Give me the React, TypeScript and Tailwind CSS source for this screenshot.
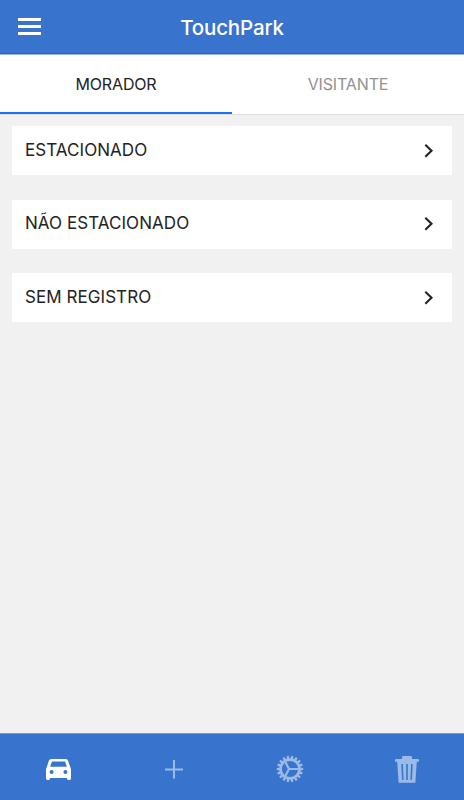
import React from 'react';

const teeth = Array.from({ length: 18 }, (_, i) => i * 20);

function CarIcon() {
  return (
    <svg viewBox="0 0 25 21" className="h-[21px] w-[25px]" fill="currentColor">
      <path
        fillRule="evenodd"
        d="M5.2 0H19.8Q21.4 0 22 1.5L24.6 9Q25 10 25 11V19.6Q25 21 23.6 21H22.3Q21 21 21 19.6V19H4V19.6Q4 21 2.7 21H1.4Q0 21 0 19.6V11Q0 10 .4 9L3 1.5Q3.6 0 5.2 0ZM6 2.4L4.1 7.8H20.9L19 2.4ZM5.6 11A2 2 0 1 0 5.6 15A2 2 0 1 0 5.6 11ZM19.4 11A2 2 0 1 0 19.4 15A2 2 0 1 0 19.4 11Z"
      />
    </svg>
  );
}

function PlusIcon() {
  return (
    <svg viewBox="0 0 20 20" className="h-5 w-5" stroke="currentColor" strokeWidth="2" fill="none">
      <path d="M1 10.4H19M10 1V19.5" />
    </svg>
  );
}

function GearIcon() {
  return (
    <svg viewBox="-14 -14 28 28" className="h-7 w-7" stroke="currentColor" fill="none">
      <circle r="9.4" strokeWidth="2.6" />
      {teeth.map((a) => (
        <path key={a} d="M10 -1.4L13.2 -1V1L10 1.4Z" transform={`rotate(${a})`} fill="currentColor" stroke="none" />
      ))}
      <path d="M-1 0H9M-1 0L-5 -7.6M-1 0L-5 7.6" strokeWidth="2.2" />
    </svg>
  );
}

function TrashIcon() {
  return (
    <svg viewBox="0 0 24 28" className="h-7 w-6" fill="currentColor">
      <path
        fillRule="evenodd"
        d="M7 4V2.4Q7 1 8.5 1H15.5Q17 1 17 2.4V4H23Q24 4 24 5V6.7H21.8L20.4 27.7H3.6L2.2 6.7H0V5Q0 4 1 4ZM6.3 9L7.1 25H8.6L7.9 9ZM11.2 9V25H12.8V9ZM16.1 9L15.4 25H16.9L17.7 9Z"
      />
    </svg>
  );
}

function Row({ label }: { label: string }) {
  return (
    <button className="flex h-[49px] w-full items-center justify-between bg-white pl-[13px] pr-[18px] text-left text-[17px] text-[#222]">
      <span className="tracking-[0.06px]">{label}</span>
      <svg viewBox="0 0 10 16" className="h-4 w-2.5" fill="none" stroke="#222" strokeWidth="2.1">
        <path d="M1.3 1.8L7.5 7.8L1.3 13.8" />
      </svg>
    </button>
  );
}

export default function App() {
  return (
    <div className="flex h-[800px] w-[464px] flex-col overflow-hidden bg-[#f1f1f1] font-['Inter','Liberation_Sans',sans-serif]">
      <header className="grid h-[55px] shrink-0 grid-cols-[1fr_auto_1fr] items-center border-b border-[#9eb9df] bg-[#3874cd] px-[18px] text-white shadow-[inset_0_-1px_0_#2468c4]">
        <button aria-label="Menu" className="mb-[2px] flex w-[23px] flex-col gap-1">
          <span className="h-[3px] bg-white" />
          <span className="h-[3px] bg-white" />
          <span className="h-[3px] bg-white" />
        </button>
        <h1 className="pt-[2px] text-[20.5px] font-medium tracking-[-0.15px]">TouchPark</h1>
      </header>
      <nav className="flex h-[60px] shrink-0 border-b border-[#dedede] bg-white text-base tracking-[-0.15px]">
        <button className="-mb-px flex h-[59px] flex-1 items-center justify-center border-b-2 border-[#1673f5] text-[#222]">MORADOR</button>
        <button className="flex h-[59px] flex-1 items-center justify-center border-b-2 border-transparent text-[#929292]">VISITANTE</button>
      </nav>
      <main className="flex flex-1 flex-col gap-[24.5px] px-3 pt-[11px]">
        <Row label="ESTACIONADO" />
        <Row label="NÃO ESTACIONADO" />
        <Row label="SEM REGISTRO" />
      </main>
      <footer className="grid h-[67px] shrink-0 grid-cols-4 place-items-center border-t border-[#719bd4] bg-[#3874cd] pt-1 text-[#9bbae6]">
        <button aria-label="Carros" className="pl-px text-white"><CarIcon /></button>
        <button aria-label="Adicionar"><PlusIcon /></button>
        <button aria-label="Ajustes"><GearIcon /></button>
        <button aria-label="Excluir" className="pl-[2px]"><TrashIcon /></button>
      </footer>
    </div>
  );
}
